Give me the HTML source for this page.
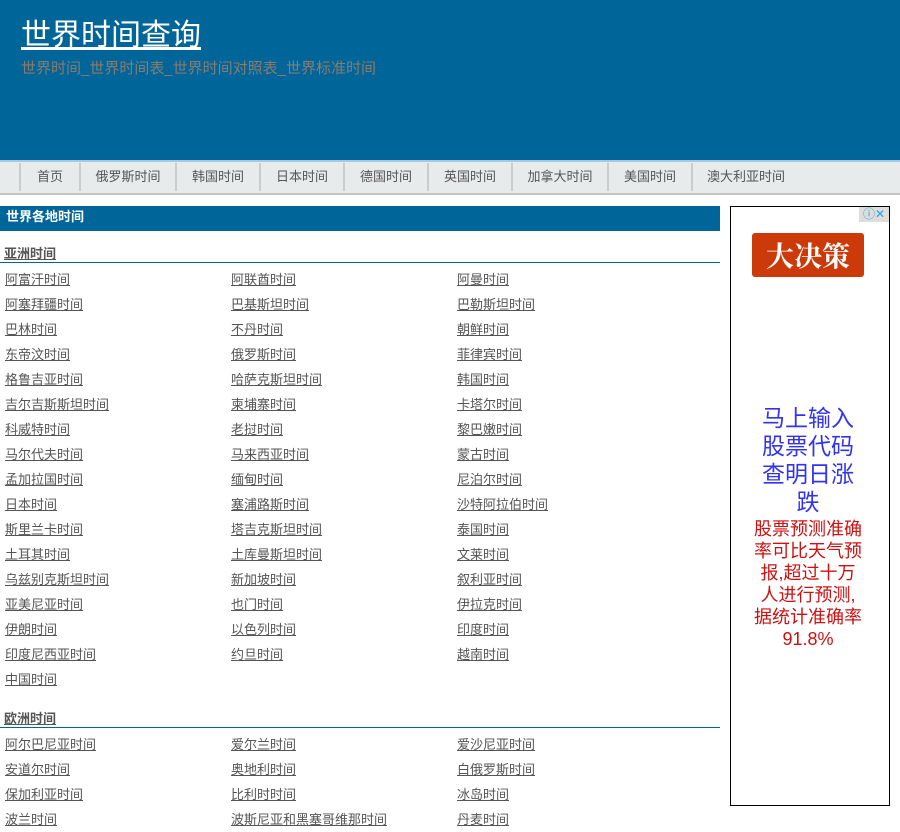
<!DOCTYPE html><html><head><meta charset="utf-8"><style>
body{margin:0;width:900px;height:818px;overflow:hidden;font-family:"Liberation Sans","Noto Sans CJK SC","WenQuanYi Zen Hei",sans-serif;background:#fff}
#hd{height:160px;background:#006699;position:relative}
#hd a{position:absolute;left:21px;top:17px;font-size:30px;color:#fff;text-decoration:underline;line-height:38px}
#hd p{position:absolute;left:21px;top:57px;margin:0;font-size:15px;color:#8c7a6c}
#nav{position:absolute;top:160px;left:0;width:900px;background:#e8ebec;border-top:2px solid #a9c8e0;border-bottom:2px solid #c4c4c4;height:31px}
#nav span{float:left;font-size:13px;color:#555;line-height:27px;border-left:2px solid #ccc;height:28px;margin-top:1px;text-align:center}
#main{position:absolute;left:0;top:206px;width:720px}
.bar{background:#006699;color:#fff;font-weight:bold;font-size:13px;height:25px;line-height:22px;padding-left:6px}
h3{margin:0;font-size:13px;color:#555;height:31px;line-height:46px;border-bottom:1px solid #006699;padding-left:4px;overflow:hidden}
h3 u{text-decoration:underline}
.g{display:grid;grid-template-columns:226px 226px 226px;padding-left:5px;padding-top:4px}
.g a{font-size:13px;color:#555;text-decoration:underline;line-height:25px;height:25px}
#ad{position:absolute;left:730px;top:206px;width:158px;height:598px;border:1px solid #000;background:#fff}
</style></head><body>
<div id="hd"><a>世界时间查询</a><p>世界时间_世界时间表_世界时间对照表_世界标准时间</p></div>
<div id="nav"><div style="padding-left:19px">
<span style="width:58px">首页</span><span style="width:94px">俄罗斯时间</span><span style="width:82px">韩国时间</span><span style="width:82px">日本时间</span><span style="width:82px">德国时间</span><span style="width:82px">英国时间</span><span style="width:94px">加拿大时间</span><span style="width:82px">美国时间</span><span style="width:106px">澳大利亚时间</span></div></div>
<div id="main">
<div class="bar">世界各地时间</div>
<h3><u>亚洲时间</u></h3>
<div class="g">
<a>阿富汗时间</a><a>阿联酋时间</a><a>阿曼时间</a>
<a>阿塞拜疆时间</a><a>巴基斯坦时间</a><a>巴勒斯坦时间</a>
<a>巴林时间</a><a>不丹时间</a><a>朝鲜时间</a>
<a>东帝汶时间</a><a>俄罗斯时间</a><a>菲律宾时间</a>
<a>格鲁吉亚时间</a><a>哈萨克斯坦时间</a><a>韩国时间</a>
<a>吉尔吉斯斯坦时间</a><a>柬埔寨时间</a><a>卡塔尔时间</a>
<a>科威特时间</a><a>老挝时间</a><a>黎巴嫩时间</a>
<a>马尔代夫时间</a><a>马来西亚时间</a><a>蒙古时间</a>
<a>孟加拉国时间</a><a>缅甸时间</a><a>尼泊尔时间</a>
<a>日本时间</a><a>塞浦路斯时间</a><a>沙特阿拉伯时间</a>
<a>斯里兰卡时间</a><a>塔吉克斯坦时间</a><a>泰国时间</a>
<a>土耳其时间</a><a>土库曼斯坦时间</a><a>文莱时间</a>
<a>乌兹别克斯坦时间</a><a>新加坡时间</a><a>叙利亚时间</a>
<a>亚美尼亚时间</a><a>也门时间</a><a>伊拉克时间</a>
<a>伊朗时间</a><a>以色列时间</a><a>印度时间</a>
<a>印度尼西亚时间</a><a>约旦时间</a><a>越南时间</a>
<a>中国时间</a>
</div>
<h3 style="margin-top:4px"><u>欧洲时间</u></h3>
<div class="g">
<a>阿尔巴尼亚时间</a><a>爱尔兰时间</a><a>爱沙尼亚时间</a>
<a>安道尔时间</a><a>奥地利时间</a><a>白俄罗斯时间</a>
<a>保加利亚时间</a><a>比利时时间</a><a>冰岛时间</a>
<a>波兰时间</a><a>波斯尼亚和黑塞哥维那时间</a><a>丹麦时间</a>
</div>
</div>
<div id="ad">
<div style="position:absolute;right:0;top:0;width:30px;height:15px;background:#ddd;color:#29a3d6;font-size:12px;line-height:15px;text-align:center">ⓘ✕</div>
<div style="position:absolute;left:21px;top:26px;width:112px;height:44px;background:#cc3a0a;border-radius:3px;color:#fff;font-size:28px;font-weight:bold;text-align:center;line-height:44px;font-family:'Noto Serif CJK SC',serif">大决策</div>
<div style="position:absolute;left:0;top:197px;width:154px;text-align:center;color:#3333ee;font-size:23px;line-height:28px">马上输入<br>股票代码<br>查明日涨<br>跌</div>
<div style="position:absolute;left:0;top:311px;width:154px;text-align:center;color:#cc1111;font-size:18px;line-height:22px">股票预测准确<br>率可比天气预<br>报,超过十万<br>人进行预测,<br>据统计准确率<br>91.8%</div>
</div>
</body></html>
